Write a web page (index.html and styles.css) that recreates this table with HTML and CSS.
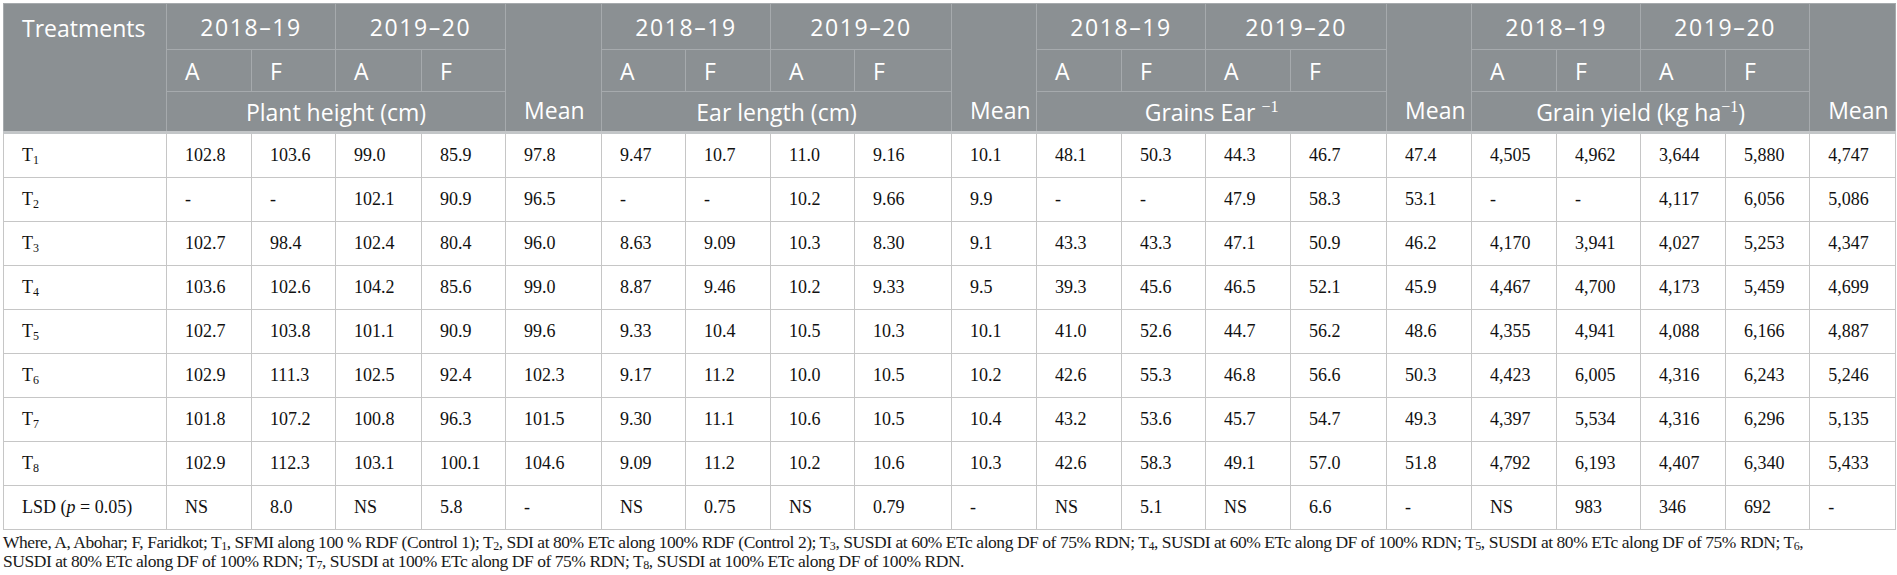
FILE: index.html
```html
<!DOCTYPE html>
<html lang="en">
<head>
<meta charset="utf-8">
<title>Table</title>
<link rel="stylesheet" href="styles.css">
</head>
<body>
<div class="wrap">
<table class="data">
<colgroup>
<col class="c-t">
<col class="c85"><col class="c84"><col class="c86"><col class="c84"><col class="c96">
<col class="c84"><col class="c85"><col class="c84"><col class="c97"><col class="c85">
<col class="c85"><col class="c84"><col class="c85"><col class="c96"><col class="c85">
<col class="c85"><col class="c84"><col class="c85"><col class="c84"><col class="c86">
</colgroup>
<thead>
<tr class="h1">
<th rowspan="3" class="top">Treatments</th>
<th colspan="2" class="ctr yr">2018–19</th><th colspan="2" class="ctr yr">2019–20</th>
<th rowspan="3" class="bot">Mean</th>
<th colspan="2" class="ctr yr">2018–19</th><th colspan="2" class="ctr yr">2019–20</th>
<th rowspan="3" class="bot">Mean</th>
<th colspan="2" class="ctr yr">2018–19</th><th colspan="2" class="ctr yr">2019–20</th>
<th rowspan="3" class="bot">Mean</th>
<th colspan="2" class="ctr yr">2018–19</th><th colspan="2" class="ctr yr">2019–20</th>
<th rowspan="3" class="bot">Mean</th>
</tr>
<tr class="h2">
<th>A</th><th>F</th><th>A</th><th>F</th>
<th>A</th><th>F</th><th>A</th><th>F</th>
<th>A</th><th>F</th><th>A</th><th>F</th>
<th>A</th><th>F</th><th>A</th><th>F</th>
</tr>
<tr class="h3">
<th colspan="4" class="ctr">Plant height (cm)</th>
<th colspan="4" class="ctr">Ear length (cm)</th>
<th colspan="4" class="ctr">Grains Ear <sup class="hs">−1</sup></th>
<th colspan="4" class="ctr">Grain yield (kg ha<sup class="hs">−1</sup>)</th>
</tr>
</thead>
<tbody>
<tr><td>T<sub>1</sub></td><td>102.8</td><td>103.6</td><td>99.0</td><td>85.9</td><td>97.8</td><td>9.47</td><td>10.7</td><td>11.0</td><td>9.16</td><td>10.1</td><td>48.1</td><td>50.3</td><td>44.3</td><td>46.7</td><td>47.4</td><td>4,505</td><td>4,962</td><td>3,644</td><td>5,880</td><td>4,747</td></tr>
<tr><td>T<sub>2</sub></td><td>-</td><td>-</td><td>102.1</td><td>90.9</td><td>96.5</td><td>-</td><td>-</td><td>10.2</td><td>9.66</td><td>9.9</td><td>-</td><td>-</td><td>47.9</td><td>58.3</td><td>53.1</td><td>-</td><td>-</td><td>4,117</td><td>6,056</td><td>5,086</td></tr>
<tr><td>T<sub>3</sub></td><td>102.7</td><td>98.4</td><td>102.4</td><td>80.4</td><td>96.0</td><td>8.63</td><td>9.09</td><td>10.3</td><td>8.30</td><td>9.1</td><td>43.3</td><td>43.3</td><td>47.1</td><td>50.9</td><td>46.2</td><td>4,170</td><td>3,941</td><td>4,027</td><td>5,253</td><td>4,347</td></tr>
<tr><td>T<sub>4</sub></td><td>103.6</td><td>102.6</td><td>104.2</td><td>85.6</td><td>99.0</td><td>8.87</td><td>9.46</td><td>10.2</td><td>9.33</td><td>9.5</td><td>39.3</td><td>45.6</td><td>46.5</td><td>52.1</td><td>45.9</td><td>4,467</td><td>4,700</td><td>4,173</td><td>5,459</td><td>4,699</td></tr>
<tr><td>T<sub>5</sub></td><td>102.7</td><td>103.8</td><td>101.1</td><td>90.9</td><td>99.6</td><td>9.33</td><td>10.4</td><td>10.5</td><td>10.3</td><td>10.1</td><td>41.0</td><td>52.6</td><td>44.7</td><td>56.2</td><td>48.6</td><td>4,355</td><td>4,941</td><td>4,088</td><td>6,166</td><td>4,887</td></tr>
<tr><td>T<sub>6</sub></td><td>102.9</td><td>111.3</td><td>102.5</td><td>92.4</td><td>102.3</td><td>9.17</td><td>11.2</td><td>10.0</td><td>10.5</td><td>10.2</td><td>42.6</td><td>55.3</td><td>46.8</td><td>56.6</td><td>50.3</td><td>4,423</td><td>6,005</td><td>4,316</td><td>6,243</td><td>5,246</td></tr>
<tr><td>T<sub>7</sub></td><td>101.8</td><td>107.2</td><td>100.8</td><td>96.3</td><td>101.5</td><td>9.30</td><td>11.1</td><td>10.6</td><td>10.5</td><td>10.4</td><td>43.2</td><td>53.6</td><td>45.7</td><td>54.7</td><td>49.3</td><td>4,397</td><td>5,534</td><td>4,316</td><td>6,296</td><td>5,135</td></tr>
<tr><td>T<sub>8</sub></td><td>102.9</td><td>112.3</td><td>103.1</td><td>100.1</td><td>104.6</td><td>9.09</td><td>11.2</td><td>10.2</td><td>10.6</td><td>10.3</td><td>42.6</td><td>58.3</td><td>49.1</td><td>57.0</td><td>51.8</td><td>4,792</td><td>6,193</td><td>4,407</td><td>6,340</td><td>5,433</td></tr>
<tr><td>LSD (<i>p</i> = 0.05)</td><td>NS</td><td>8.0</td><td>NS</td><td>5.8</td><td>-</td><td>NS</td><td>0.75</td><td>NS</td><td>0.79</td><td>-</td><td>NS</td><td>5.1</td><td>NS</td><td>6.6</td><td>-</td><td>NS</td><td>983</td><td>346</td><td>692</td><td>-</td></tr>
</tbody>
</table>
<p class="note"><span class="ln">Where, A, Abohar; F, Faridkot; T<sub>1</sub>, SFMI along 100 % RDF (Control 1); T<sub>2</sub>, SDI at 80% ETc along 100% RDF (Control 2); T<sub>3</sub>, SUSDI at 60% ETc along DF of 75% RDN; T<sub>4</sub>, SUSDI at 60% ETc along DF of 100% RDN; T<sub>5</sub>, SUSDI at 80% ETc along DF of 75% RDN; T<sub>6</sub>,</span><span class="ln">SUSDI at 80% ETc along DF of 100% RDN; T<sub>7</sub>, SUSDI at 100% ETc along DF of 75% RDN; T<sub>8</sub>, SUSDI at 100% ETc along DF of 100% RDN.</span></p>
</div>
</body>
</html>
```
FILE: styles.css
```css
html, body {
  margin: 0;
  padding: 0;
  background: #ffffff;
}

.wrap {
  padding: 3px 2px 0 3px;
}

.data {
  border-collapse: collapse;
  table-layout: fixed;
  width: 1892px;
  border: 1px solid #c6c6c6;
}

.c-t { width: 163px; }
.c84 { width: 84px; }
.c85 { width: 85px; }
.c86 { width: 86px; }
.c96 { width: 96px; }
.c97 { width: 97px; }

.data th {
  background: #8b9093;
  color: #ffffff;
  font-family: "Open Sans", Lato, sans-serif;
  font-weight: 400;
  font-size: 23px;
  text-align: left;
  padding: 0 0 0 18px;
  border: 1px solid #a6aaad;
  white-space: nowrap;
}

.data th.ctr {
  text-align: center;
  padding: 0;
}

.data th.yr { letter-spacing: 1.6px; }

.data th.top { vertical-align: top; padding-top: 8px; }
.data th.bot { vertical-align: bottom; padding-bottom: 5px; }

.h1 { height: 46px; }
.h2 { height: 42px; }
.h3 { height: 41px; }

.data thead tr.h3 th { border-bottom: 3px solid #c3c6c8; }
.data thead th.top, .data thead th.bot { border-bottom: 3px solid #c3c6c8; }

.hs {
  font-family: "Liberation Serif", serif;
  font-size: 16px;
  vertical-align: 9px;
  line-height: 0;
}

.data td {
  font-family: "Liberation Serif", "Times New Roman", serif;
  font-size: 18px;
  color: #111111;
  height: 43px;
  padding: 0 0 0 18px;
  border: 1px solid #c6c6c6;
  white-space: nowrap;
  vertical-align: middle;
}

.data td sub {
  font-size: 12px;
  vertical-align: -3px;
  line-height: 0;
}

.note {
  margin: 3px 0 0 0;
  font-family: "Liberation Serif", "Times New Roman", serif;
  font-size: 17.5px;
  letter-spacing: -0.45px;
  line-height: 19px;
  color: #1a1a1a;
}

.note .ln {
  display: block;
  white-space: nowrap;
}

.note sub {
  font-size: 12px;
  vertical-align: -2px;
  line-height: 0;
}
```
